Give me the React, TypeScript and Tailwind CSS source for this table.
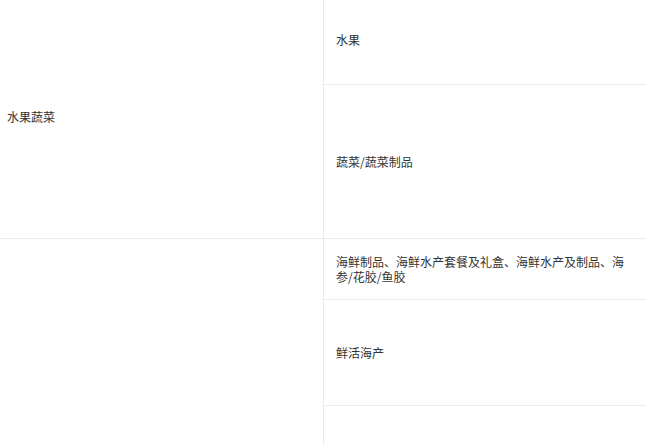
type Group = { label: string; rows: { name: string; height: string }[] }

const groups: Group[] = [
  {
    label: '水果蔬菜',
    rows: [
      { name: '水果', height: 'h-[91px]' },
      { name: '蔬菜/蔬菜制品', height: 'h-[153px]' },
    ],
  },
  {
    label: '',
    rows: [
      { name: '海鲜制品、海鲜水产套餐及礼盒、海鲜水产及制品、海参/花胶/鱼胶', height: 'h-[61px]' },
      { name: '鲜活海产', height: 'h-[106px]' },
      { name: '', height: 'h-[106px]' },
    ],
  },
]

export default function App() {
  return (
    <div
      className="w-[646px] h-[445px] overflow-hidden bg-white text-[12px] leading-[15px] text-[#333]"
      style={{ fontFamily: '"Microsoft YaHei", "Noto Sans CJK SC", sans-serif' }}
    >
      <div className="-mt-[6px]">
        {groups.map((group, g) => (
          <div key={g} className="grid grid-cols-[324px_1fr] border-b border-[#ebebeb]">
            <div className="flex items-center border-r border-[#ebebeb] pl-[7px]">{group.label}</div>
            <div className="flex flex-col">
              {group.rows.map((row, i) => (
                <div
                  key={i}
                  className={`flex items-center px-3 ${row.height} ${i < group.rows.length - 1 ? 'border-b border-[#ebebeb]' : ''}`}
                >
                  {row.name}
                </div>
              ))}
            </div>
          </div>
        ))}
      </div>
    </div>
  )
}
